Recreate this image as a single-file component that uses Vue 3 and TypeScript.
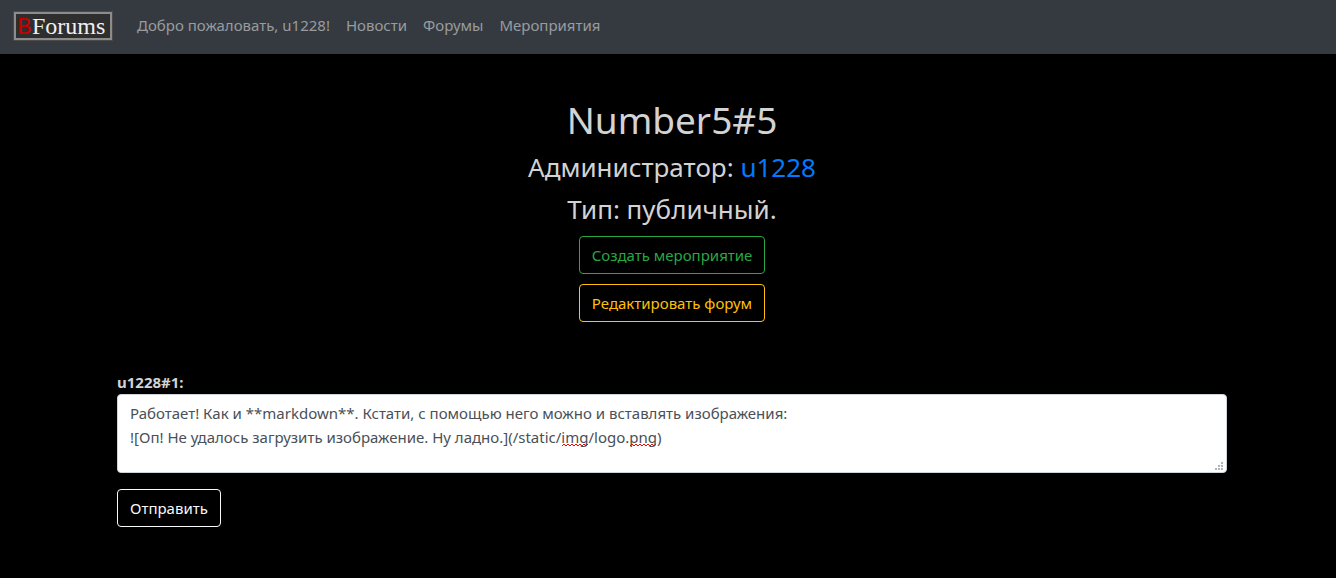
<script setup lang="ts">
import { ref } from 'vue'

interface NavItem {
  label: string
  href: string
}

const navItems: NavItem[] = [
  { label: 'Добро пожаловать, u1228!', href: '#profile' },
  { label: 'Новости', href: '#news' },
  { label: 'Форумы', href: '#forums' },
  { label: 'Мероприятия', href: '#events' },
]

const message = ref(
  'Работает! Как и **markdown**. Кстати, с помощью него можно и вставлять изображения:\n' +
    '![Оп! Не удалось загрузить изображение. Ну ладно.](/static/img/logo.png)',
)
</script>

<template>
  <nav class="navbar">
    <a class="brand" href="#home" aria-label="BForums">
      <svg class="logo" width="100" height="30" viewBox="0 0 100 30">
        <rect x="1" y="1" width="98" height="28" fill="#2e2e2e" stroke="#4a4a4a" stroke-width="2" />
        <rect x="2" y="2" width="96" height="26" fill="none" stroke="#8c8c8c" stroke-width="2" />
        <text class="logo-b" x="4" y="23">B</text>
        <text class="logo-rest" x="19" y="23">Forums</text>
      </svg>
    </a>
    <ul class="nav-list">
      <li v-for="item in navItems" :key="item.label">
        <a class="nav-link" :href="item.href">{{ item.label }}</a>
      </li>
    </ul>
  </nav>

  <main class="container">
    <header class="forum">
      <h1>Number5#5</h1>
      <h3>Администратор: <a href="#u1228">u1228</a></h3>
      <h3>Тип: публичный.</h3>
      <button type="button" class="btn success">Создать мероприятие</button>
      <button type="button" class="btn warning">Редактировать форум</button>
    </header>

    <form class="reply" @submit.prevent>
      <label for="message">u1228#1:</label>
      <div class="editor">
        <textarea id="message" v-model="message" rows="3" spellcheck="false"></textarea>
        <svg class="spelling" width="96" height="4" viewBox="0 0 96 4" aria-hidden="true">
          <path
            d="M0 3l2-2 2 2 2-2 2 2 2-2 2 2 2-2 2 2 2-2 2 2 2-2 2 2 2-2M68 3l2-2 2 2 2-2 2 2 2-2 2 2 2-2 2 2 2-2 2 2 2-2 2 2 2-2"
            fill="none"
            stroke="#f00"
          />
        </svg>
        <svg class="grip" width="8" height="8" viewBox="0 0 8 8" aria-hidden="true">
          <path d="M6 0h2v2h-2zM3 3h2v2h-2zM6 3h2v2h-2zM0 6h2v2h-2zM3 6h2v2h-2zM6 6h2v2h-2z" fill="#b4b4b4" />
        </svg>
      </div>
      <button type="submit" class="btn light">Отправить</button>
    </form>
  </main>
</template>

<style>
body {
  background: #000;
}
</style>

<style scoped>
.navbar,
.container {
  font-family: 'Noto Sans', 'Open Sans', sans-serif;
  font-size: 15px;
  line-height: 24px;
  color: #d3d3d3;
}

.navbar {
  display: flex;
  align-items: flex-start;
  gap: 16px;
  padding: 5px 13px 9px;
  background: #343a40;
}

.brand {
  display: flex;
  padding-top: 6px;
}

.logo-b {
  fill: #c80000;
  font: 24px 'Liberation Mono', monospace;
}

.logo-rest {
  fill: #f0f0f0;
  font: 24px 'Liberation Serif', serif;
}

.nav-list {
  display: flex;
  margin: 0;
  padding: 0;
  list-style: none;
}

.nav-link {
  display: block;
  padding: 8px;
  color: #999c9f;
  text-decoration: none;
}

.container {
  box-sizing: border-box;
  max-width: 1140px;
  margin: 0 auto;
  padding: 42px 11px 48px 19px;
}

.forum {
  display: flex;
  flex-direction: column;
  align-items: center;
}

h1,
h3 {
  margin: 0 0 8px;
  font-weight: 400;
}

h1 {
  margin-bottom: 6px;
  font-size: 37px;
  line-height: 48px;
}

h3 {
  font-size: 26px;
  line-height: 34px;
}

h3 a {
  color: #007bff;
  text-decoration: none;
}

.btn {
  box-sizing: border-box;
  height: 38px;
  padding: 0 12px;
  border: 1px solid currentColor;
  border-radius: 4px;
  background: transparent;
  font: inherit;
  cursor: pointer;
}

.success {
  margin: 2px 0 10px;
  color: #28a745;
}

.warning {
  color: #ffc107;
}

.light {
  color: #f8f9fa;
}

.reply {
  margin-top: 48px;
}

.reply label {
  display: block;
  font-weight: 700;
}

.editor {
  position: relative;
  display: flex;
  margin-bottom: 16px;
}

.editor textarea {
  box-sizing: border-box;
  width: 100%;
  height: 79px;
  padding: 6px 12px;
  border: 1px solid #ced4da;
  border-radius: 4px;
  background: #fff;
  color: #495057;
  font: inherit;
  resize: none;
}

.spelling {
  position: absolute;
  top: 49px;
  left: 445px;
  pointer-events: none;
}

.grip {
  position: absolute;
  right: 4px;
  bottom: 3px;
}
</style>
